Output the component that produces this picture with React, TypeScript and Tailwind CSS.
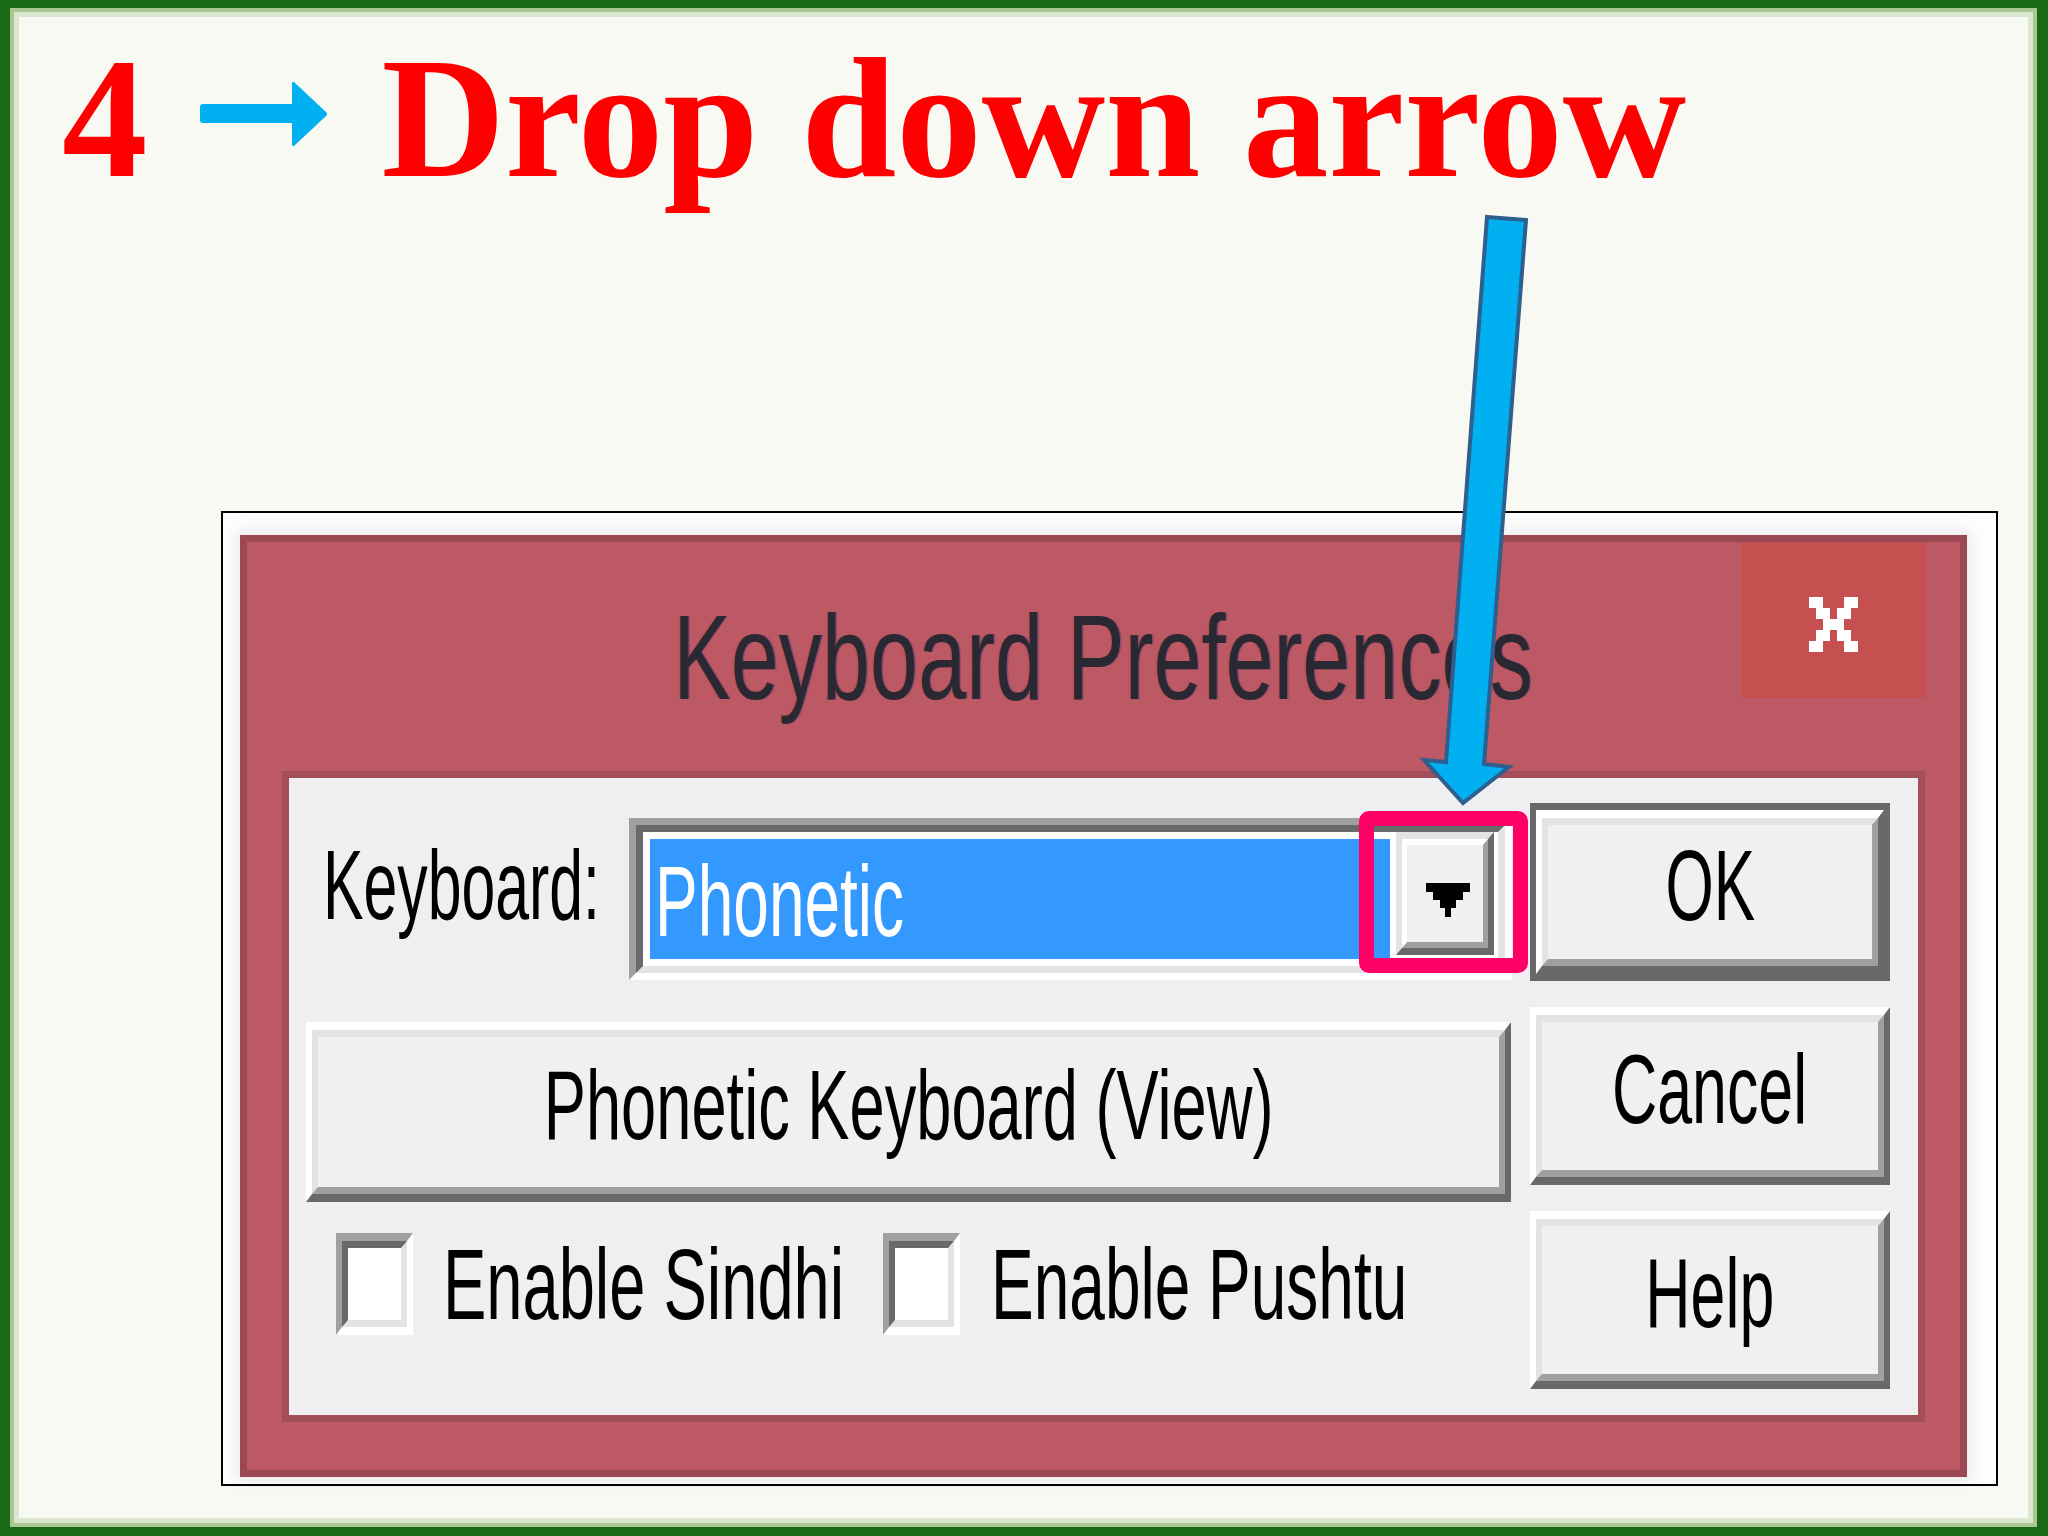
import type { ReactNode } from "react";

// Classic 3D raised edge used by the dialog buttons
function Raised({ children, className = "" }: { children?: ReactNode; className?: string }) {
    return (
        <div
            className={`flex border-x-[6px] border-y-[8px] border-t-white border-l-white border-r-[#696969] border-b-[#696969] ${className}`}
        >
            <div className="flex flex-1 items-center justify-center border-x-[6px] border-y-[7px] border-t-[#e3e3e3] border-l-[#e3e3e3] border-r-[#a0a0a0] border-b-[#a0a0a0] bg-[#f0f0f0] pb-[14px]">
                {children}
            </div>
        </div>
    );
}

function CheckBox() {
    return (
        <div className="h-[102px] w-[77px] shrink-0 border-x-[6px] border-y-[8px] border-t-[#a0a0a0] border-l-[#a0a0a0] border-r-white border-b-white">
            <div className="h-full w-full border-x-[6px] border-y-[7px] border-t-[#696969] border-l-[#696969] border-r-[#e3e3e3] border-b-[#e3e3e3] bg-white" />
        </div>
    );
}

function CloseGlyph() {
    return (
        <svg width="49" height="55" viewBox="0 0 49 55" fill="#ffffff">
            <rect x="0" y="0" width="14" height="11" />
            <rect x="35" y="0" width="14" height="11" />
            <rect x="7" y="11" width="14" height="11" />
            <rect x="28" y="11" width="14" height="11" />
            <rect x="14" y="22" width="21" height="11" />
            <rect x="7" y="33" width="14" height="11" />
            <rect x="28" y="33" width="14" height="11" />
            <rect x="0" y="44" width="14" height="11" />
            <rect x="35" y="44" width="14" height="11" />
        </svg>
    );
}

function DropGlyph() {
    return (
        <svg width="44" height="34" viewBox="0 0 44 34" fill="#000000">
            <path d="M0 0H44V9H37V17H30V25H25V34H19V25H14V17H7V9H0Z" />
        </svg>
    );
}

export default function App() {
    return (
        <div className="relative h-[1536px] w-[2048px] overflow-hidden">
            <div className="flex h-full w-full flex-col border-b-[9px] border-l-[10px] border-r-[11px] border-t-[8px] border-[#1a6b16]">
                <div className="flex flex-1 flex-col border-[4px] border-[#abc893]">
                    <div className="flex flex-1 flex-col border-[5px] border-[#dbe8cf] bg-[#f7f9f2]">
                        {/* Heading */}
                        <div className="ml-[43px] mt-[16px] flex items-start font-['Liberation_Serif','Times_New_Roman',serif] text-[171px] font-bold leading-none text-[#ff0000]">
                            <span>4</span>
                            <svg className="ml-[52px] mt-[48px] shrink-0" width="128" height="66" viewBox="0 0 128 66" fill="#00b0f0">
                                <rect x="0" y="23" width="96" height="19" rx="3" />
                                <path d="M92 3Q92 -1 95 2L126 31Q128 33 126 35L95 64Q92 67 92 63Z" />
                            </svg>
                            <span className="ml-[54px] whitespace-nowrap">Drop down arrow</span>
                        </div>

                        {/* Dialog screenshot */}
                        <div className="ml-[202px] mt-[307px] flex h-[975px] w-[1777px] flex-col border-2 border-black bg-[#fdfdfd] pb-[7px] pl-[17px] pr-[29px] pt-[22px]">
                            <div className="flex flex-1 flex-col border-[7px] border-[#9a4852] bg-[#bc5965] shadow-[0_0_14px_4px_rgba(0,0,0,0.08)]">
                                {/* Title bar */}
                                <div className="grid h-[229px] grid-cols-[1fr_auto_1fr]">
                                    <div />
                                    <div className="pt-[55px]">
                                        <span className="inline-block origin-center scale-x-[0.72] whitespace-nowrap font-['Liberation_Sans',Arial,sans-serif] text-[120px] leading-none text-[#2a2833] [text-shadow:-2px_0_0_rgba(190,70,40,0.35),2px_0_0_rgba(40,50,120,0.35)]">
                                            Keyboard Preferences
                                        </span>
                                    </div>
                                    <div className="flex justify-end">
                                        <div className="mr-[34px] flex h-[156px] w-[185px] items-center justify-center bg-[#c64f50] pt-[8px]">
                                            <CloseGlyph />
                                        </div>
                                    </div>
                                </div>

                                {/* Client area */}
                                <div className="mx-[35px] mb-[48px] flex flex-1 border-[7px] border-[#a24f59] bg-[#efeff2] pl-[17px] pr-[29px] font-['Liberation_Sans',Arial,sans-serif] leading-none text-black">
                                    <div className="flex w-[1205px] shrink-0 flex-col pt-[40px]">
                                        <div className="flex h-[162px]">
                                            <div className="w-[323px] shrink-0 pl-[17px] pt-[18px]">
                                                <span className="inline-block origin-left scale-x-[0.62] whitespace-nowrap text-[98px]">
                                                    Keyboard:
                                                </span>
                                            </div>
                                            <div className="relative flex w-[883px] shrink-0 border-[7px] border-t-[#a0a0a0] border-l-[#a0a0a0] border-r-white border-b-white">
                                                <div className="flex flex-1 border-[7px] border-t-[#696969] border-l-[#696969] border-r-[#e3e3e3] border-b-[#e3e3e3] bg-white">
                                                    <div className="my-[7px] ml-[7px] mr-[6px] flex flex-1 items-start bg-[#3399ff] pl-[5px] pt-[12px]">
                                                        <span className="inline-block origin-left scale-x-[0.64] whitespace-nowrap text-[100px] text-white">
                                                            Phonetic
                                                        </span>
                                                    </div>
                                                    <div className="mb-[11px] mr-[4px] flex w-[98px] border-x-[6px] border-y-[7px] border-t-[#e3e3e3] border-l-[#e3e3e3] border-r-[#696969] border-b-[#696969]">
                                                        <div className="flex flex-1 items-center justify-center border-x-[5px] border-y-[6px] border-t-white border-l-white border-r-[#a0a0a0] border-b-[#a0a0a0] bg-[#f0f0f0] pl-[6px] pt-[12px]">
                                                            <DropGlyph />
                                                        </div>
                                                    </div>
                                                </div>
                                                {/* highlight around the drop down button */}
                                                <div className="absolute left-[723px] top-[-14px] h-[162px] w-[169px] rounded-[10px] border-[15px] border-[#ff0066]" />
                                            </div>
                                        </div>

                                        <Raised className="mt-[42px] h-[180px]">
                                            <span className="inline-block origin-center scale-x-[0.645] whitespace-nowrap text-[98px]">
                                                Phonetic Keyboard (View)
                                            </span>
                                        </Raised>

                                        <div className="mt-[31px] flex items-start pl-[30px]">
                                            <CheckBox />
                                            <div className="ml-[30px] w-[388px] shrink-0 pt-[1px]">
                                                <span className="inline-block origin-left scale-x-[0.65] whitespace-nowrap text-[100px]">
                                                    Enable Sindhi
                                                </span>
                                            </div>
                                            <div className="ml-[52px]">
                                                <CheckBox />
                                            </div>
                                            <div className="ml-[31px] w-[414px] shrink-0 pt-[1px]">
                                                <span className="inline-block origin-left scale-x-[0.64] whitespace-nowrap text-[100px]">
                                                    Enable Pushtu
                                                </span>
                                            </div>
                                        </div>
                                    </div>

                                    <div className="ml-[19px] flex w-[360px] shrink-0 flex-col gap-[26px] pt-[25px]">
                                        <div className="flex h-[178px] border-x-[6px] border-y-[7px] border-[#696969]">
                                            <Raised className="flex-1">
                                                <span className="inline-block origin-center scale-x-[0.62] whitespace-nowrap text-[100px]">
                                                    OK
                                                </span>
                                            </Raised>
                                        </div>
                                        <Raised className="h-[178px]">
                                            <span className="inline-block origin-center scale-x-[0.64] whitespace-nowrap text-[98px]">
                                                Cancel
                                            </span>
                                        </Raised>
                                        <Raised className="h-[178px]">
                                            <span className="inline-block origin-center scale-x-[0.64] whitespace-nowrap text-[98px]">
                                                Help
                                            </span>
                                        </Raised>
                                    </div>
                                </div>
                            </div>
                        </div>
                    </div>
                </div>
            </div>

            {/* Callout arrow pointing at the drop down button */}
            <svg className="pointer-events-none absolute left-0 top-0" width="2048" height="1536" viewBox="0 0 2048 1536">
                <polygon
                    points="1487,217 1526,220 1484,764 1509,767 1463,803 1424,760 1446,762"
                    fill="#00b0f0"
                    stroke="#2f5f8f"
                    strokeWidth="4"
                />
            </svg>
        </div>
    );
}
